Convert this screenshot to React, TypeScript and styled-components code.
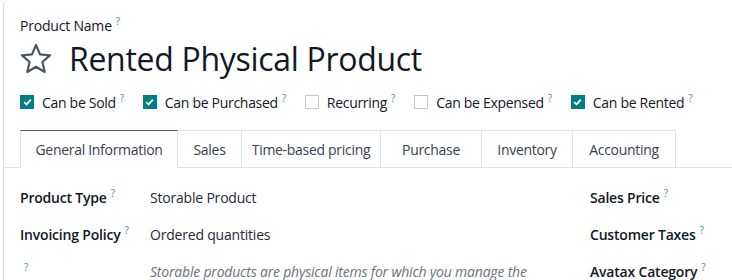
import styled, { createGlobalStyle } from "styled-components";

const GlobalStyle = createGlobalStyle`
  body {
    margin: 0;
    background: #ffffff;
    font-family: "Open Sans", "Liberation Sans", sans-serif;
    color: #111827;
  }
`;

const Sheet = styled.div`
  height: 280px;
  box-sizing: border-box;
  overflow: hidden;
  border-left: 1px solid #d8dadd;
  border-top-left-radius: 6px;
  margin-left: 3px;
  padding-top: 15px;
`;

const Head = styled.div`
  padding-left: 16px;
`;

const Label = styled.div<{ $weight?: number }>`
  font-size: 14px;
  line-height: 21px;
  letter-spacing: -0.2px;
  font-weight: ${(p) => p.$weight ?? 600};
  color: #111827;
  white-space: nowrap;
`;

const Tip = styled.sup`
  color: #3a8fb7;
  font-size: 10px;
  line-height: 0;
  font-weight: 400;
  margin-left: 4px;
  vertical-align: 6px;
`;

const TitleRow = styled.div`
  display: flex;
  align-items: center;
  gap: 17px;
  margin-top: 0;
  height: 46px;
`;

const Title = styled.h1`
  margin: 0;
  font-size: 32px;
  font-weight: 400;
  line-height: 46px;
  letter-spacing: -0.3px;
  color: #111827;
`;

const Options = styled.div`
  display: flex;
  align-items: center;
  gap: 19px;
  margin-top: 7px;
  height: 26px;
`;

const Option = styled.label`
  display: flex;
  align-items: center;
  gap: 8px;
  font-size: 14px;
  letter-spacing: -0.3px;
  color: #111827;
  white-space: nowrap;
`;

const Box = styled.span<{ $on: boolean }>`
  width: 14px;
  height: 14px;
  box-sizing: border-box;
  display: inline-flex;
  align-items: center;
  justify-content: center;
  background: ${(p) => (p.$on ? "#017e84" : "#ffffff")};
  border: 1px solid ${(p) => (p.$on ? "#017e84" : "#c4c7cc")};
`;

const Tabs = styled.div`
  display: flex;
  margin-top: 15px;
  padding-left: 16px;
  border-bottom: 1px solid #dee2e6;
`;

const Tab = styled.div<{ $active?: boolean }>`
  height: 38px;
  box-sizing: border-box;
  display: flex;
  align-items: center;
  justify-content: center;
  font-size: 14px;
  letter-spacing: -0.3px;
  color: #374151;
  border: 1px solid #dee2e6;
  border-left-width: ${(p) => (p.$active ? "1px" : "0")};
  border-top-color: ${(p) => (p.$active ? "#714b67" : "#dee2e6")};
  margin-bottom: -1px;
  border-bottom-color: ${(p) => (p.$active ? "#ffffff" : "#dee2e6")};
  background: #ffffff;
`;

const Body = styled.div`
  display: flex;
  padding-left: 16px;
  padding-top: 19px;
`;

const LeftCol = styled.div`
  flex: 1;
  display: grid;
  grid-template-columns: 130px 1fr;
  grid-auto-rows: 37px;
`;

const RightCol = styled.div`
  width: 142px;
  display: grid;
  grid-auto-rows: 37px;
`;

const Value = styled.div<{ $note?: boolean }>`
  font-size: 14px;
  line-height: 21px;
  letter-spacing: -0.2px;
  white-space: nowrap;
  color: ${(p) => (p.$note ? "#6b7280" : "#1f2937")};
  font-style: ${(p) => (p.$note ? "italic" : "normal")};
`;

function Star() {
  return (
    <svg width="32" height="32" viewBox="0 0 32 32">
      <path
        d="M16 2 L20 11.4 L30 12.3 L22.4 19 L24.7 29 L16 23.8 L7.3 29 L9.6 19 L2 12.3 L12 11.4 Z"
        fill="none"
        stroke="#4b5563"
        strokeWidth="2.2"
        strokeLinejoin="round"
      />
    </svg>
  );
}

function Check() {
  return (
    <svg width="9" height="8" viewBox="0 0 9 8">
      <path d="M1.2 4.2 L3.6 6.4 L7.8 1.6" fill="none" stroke="#fff" strokeWidth="1.8" />
    </svg>
  );
}

const options = [
  { name: "Can be Sold", on: true },
  { name: "Can be Purchased", on: true },
  { name: "Recurring", on: false },
  { name: "Can be Expensed", on: false },
  { name: "Can be Rented", on: true },
];

const tabs = [
  { name: "General Information", w: 158 },
  { name: "Sales", w: 64 },
  { name: "Time-based pricing", w: 139 },
  { name: "Purchase", w: 101 },
  { name: "Inventory", w: 91 },
  { name: "Accounting", w: 103 },
];

export default function App() {
  return (
    <>
      <GlobalStyle />
      <Sheet>
        <Head>
          <Label $weight={500}>
            Product Name<Tip>?</Tip>
          </Label>
          <TitleRow>
            <Star />
            <Title>Rented Physical Product</Title>
          </TitleRow>
          <Options>
            {options.map((o) => (
              <Option key={o.name}>
                <Box $on={o.on}>{o.on && <Check />}</Box>
                <span>
                  {o.name}
                  <Tip>?</Tip>
                </span>
              </Option>
            ))}
          </Options>
        </Head>
        <Tabs>
          {tabs.map((t, i) => (
            <Tab key={t.name} $active={i === 0} style={{ width: t.w }}>
              {t.name}
            </Tab>
          ))}
        </Tabs>
        <Body>
          <LeftCol>
            <Label>
              Product Type<Tip>?</Tip>
            </Label>
            <Value>Storable Product</Value>
            <Label>
              Invoicing Policy<Tip>?</Tip>
            </Label>
            <Value>Ordered quantities</Value>
            <Label>
              <Tip>?</Tip>
            </Label>
            <Value $note>Storable products are physical items for which you manage the</Value>
          </LeftCol>
          <RightCol>
            <Label>
              Sales Price<Tip>?</Tip>
            </Label>
            <Label>
              Customer Taxes<Tip>?</Tip>
            </Label>
            <Label>
              Avatax Category<Tip>?</Tip>
            </Label>
          </RightCol>
        </Body>
      </Sheet>
    </>
  );
}
